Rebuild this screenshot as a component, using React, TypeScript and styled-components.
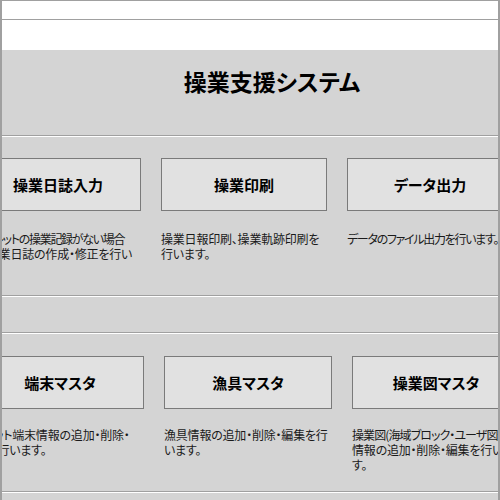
import styled, { createGlobalStyle } from 'styled-components';

type Line = {
  text: string;
  spacing?: number;
};

type Item = {
  label: string;
  lines: Line[];
  shift?: number;
};

const topItems: Item[] = [
  {
    label: '操業日誌入力',
    lines: [{ text: 'タブレットの操業記録がない場合', spacing: -1.3 }, { text: 'は操業日誌の作成・修正を行い' }],
  },
  { label: '操業印刷', lines: [{ text: '操業日報印刷、操業軌跡印刷を' }, { text: '行います。' }] },
  { label: 'データ出力', lines: [{ text: 'データのファイル出力を行います。', spacing: -1.3 }] },
];

const masterItems: Item[] = [
  {
    label: '端末マスタ',
    shift: -13,
    lines: [{ text: 'タブレット端末情報の追加・削除・' }, { text: '編集を行います。' }],
  },
  { label: '漁具マスタ', lines: [{ text: '漁具情報の追加・削除・編集を行' }, { text: 'います。' }] },
  {
    label: '操業図マスタ',
    lines: [
      { text: '操業図(海域ブロック・ユーザ図形)', spacing: -0.9 },
      { text: '情報の追加・削除・編集を行いま' },
      { text: 'す。' },
    ],
  },
];

const MenuGroup = ({ items, gap }: { items: Item[]; gap: number }) => (
  <>
    {items.map((item) => (
      <Cell key={item.label}>
        <MenuButton type="button">{item.label}</MenuButton>
        <Description $gap={gap} $shift={item.shift ?? 0}>
          {item.lines.map((line) => (
            <DescLine key={line.text} $spacing={line.spacing ?? -0.2}>
              {line.text}
            </DescLine>
          ))}
        </Description>
      </Cell>
    ))}
  </>
);

const App = () => {
  return (
    <>
      <GlobalStyle />
      <Frame>
        <MenuStrip />
        <ToolStrip />
        <Header>
          <Title>操業支援システム</Title>
        </Header>
        <Separator />
        <Section $height={158} $padTop={21}>
          <ButtonRow $colWidth={166} $offset={-27}>
            <MenuGroup items={topItems} gap={20} />
          </ButtonRow>
        </Section>
        <Separator />
        <Section $height={35} $padTop={0} />
        <Separator />
        <Section $height={157} $padTop={22}>
          <ButtonRow $colWidth={168} $offset={-26}>
            <MenuGroup items={masterItems} gap={18} />
          </ButtonRow>
        </Section>
        <Separator />
      </Frame>
    </>
  );
};

const GlobalStyle = createGlobalStyle`
  html, body {
    margin: 0;
    padding: 0;
    overflow: hidden;
    background: #ffffff;
  }

  body {
    font-family: "Noto Sans CJK JP", "Noto Sans", sans-serif;
    font-feature-settings: "palt";
  }
`;

const Frame = styled.div`
  box-sizing: border-box;
  width: 500px;
  height: 500px;
  overflow: hidden;

  border-top: 1px solid #a0a0a0;
  border-left: 2px solid #a0a0a0;
  border-right: 2px solid #a0a0a0;
  background: #d4d4d4;
`;

const MenuStrip = styled.div`
  height: 18px;
  background: #ffffff;
  border-bottom: 1px solid #a0a0a0;
`;

const ToolStrip = styled.div`
  height: 30px;
  background: #ffffff;
`;

const Header = styled.div`
  box-sizing: border-box;
  display: flex;
  justify-content: center;
  align-items: center;

  height: 85px;
  padding: 0 0 22px 44px;
`;

const Title = styled.h1`
  margin: 0;

  color: #000000;
  font-size: 23px;
  font-weight: 700;
  line-height: 1;
`;

const Separator = styled.div`
  height: 0;
  border-top: 1px solid #a0a0a0;
  border-bottom: 1px solid #ffffff;
`;

const Section = styled.div<{ $height: number; $padTop: number }>`
  box-sizing: border-box;
  height: ${({ $height }) => $height}px;
  padding-top: ${({ $padTop }) => $padTop}px;
`;

const ButtonRow = styled.div<{ $colWidth: number; $offset: number }>`
  display: grid;
  grid-template-columns: repeat(3, ${({ $colWidth }) => $colWidth}px);
  column-gap: 20px;

  margin-left: ${({ $offset }) => $offset}px;
`;

const Cell = styled.div`
  display: flex;
  flex-direction: column;
`;

const MenuButton = styled.button`
  box-sizing: border-box;
  height: 53px;
  margin: 0;
  padding: 0;

  border: 1px solid #7a7a7a;
  border-radius: 0;
  background: #e1e1e1;

  color: #000000;
  font-family: "Noto Sans CJK JP", "Noto Sans", sans-serif;
  font-feature-settings: "palt";
  font-size: 15px;
  font-weight: 700;
`;

const Description = styled.div<{ $gap: number; $shift: number }>`
  margin-top: ${({ $gap }) => $gap}px;
  margin-left: ${({ $shift }) => $shift}px;

  color: #1a1a1a;
  font-size: 12px;
  line-height: 15px;
  white-space: nowrap;
`;

const DescLine = styled.div<{ $spacing: number }>`
  letter-spacing: ${({ $spacing }) => $spacing}px;
`;

export default App;
